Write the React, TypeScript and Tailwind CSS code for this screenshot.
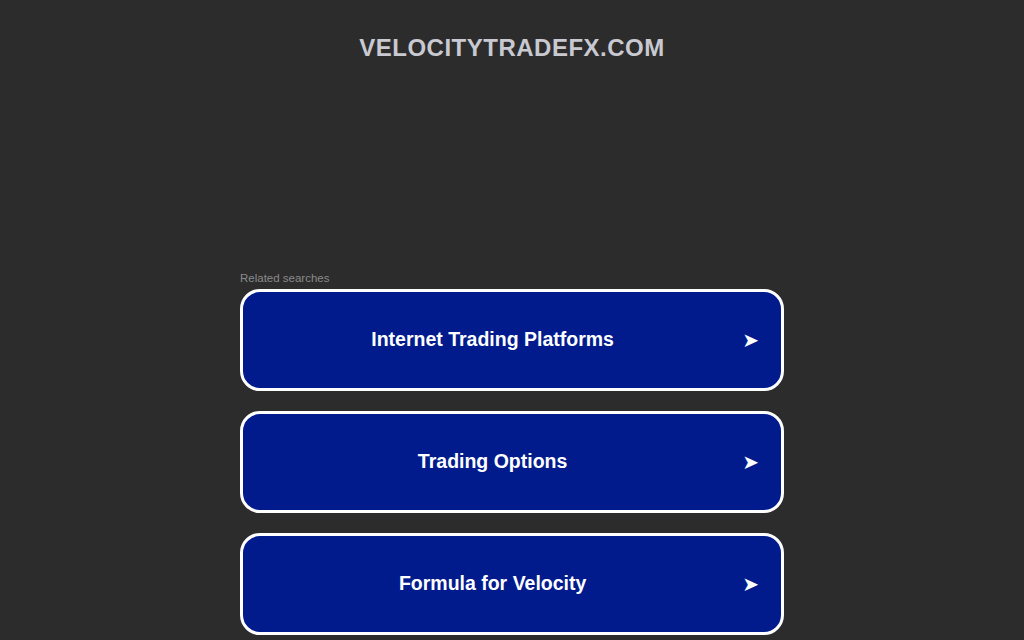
const searches = ['Internet Trading Platforms', 'Trading Options', 'Formula for Velocity'];

const SearchLink = ({ label }: { label: string }) => (
  <a
    href="#"
    className="flex h-[102px] items-center rounded-[20px] border-[3px] border-white bg-[#011b8c] pr-[22px] text-white"
  >
    <span className="flex-1 text-center text-[19.5px] font-bold">{label}</span>
    <span className="text-[20px] leading-none font-['DejaVu_Sans',sans-serif]">➤</span>
  </a>
);

export default function App() {
  return (
    <div className="min-h-[640px] bg-[#2c2c2c] font-['Liberation_Sans',Arial,sans-serif]">
      <div className="pt-[34px] text-center">
        <h1 className="text-[24px] leading-[28px] font-bold tracking-[0.5px] text-[#c9c9d1]">
          VELOCITYTRADEFX.COM
        </h1>
      </div>
      <div className="mx-auto mt-[209px] w-[544px]">
        <p className="mb-[4px] text-[11.5px] leading-[14px] text-[#8a8a8a]">Related searches</p>
        <div className="flex flex-col gap-[20px]">
          {searches.map((s) => (
            <SearchLink key={s} label={s} />
          ))}
        </div>
      </div>
    </div>
  );
}
